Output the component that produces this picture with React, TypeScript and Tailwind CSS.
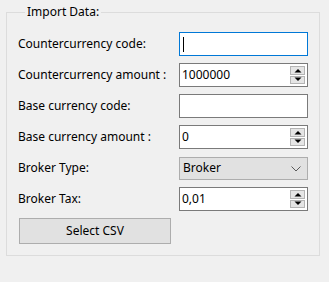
import React from 'react'

const font = { fontFamily: '"Noto Sans", "Segoe UI", sans-serif' }

function Spinner() {
  return (
    <div className="absolute right-[1px] top-[1px] bottom-[1px] w-[16px] flex flex-col gap-[1px] py-[1px] pr-[1px]">
      <div className="flex-1 bg-[#e5e5e5] border border-[#b4b4b4] flex items-center justify-center">
        <svg width="8" height="5" viewBox="0 0 8 5">
          <path d="M0.5 4.5 L4 1 L7.5 4.5 Z" fill="#000" />
        </svg>
      </div>
      <div className="flex-1 bg-[#e5e5e5] border border-[#b4b4b4] flex items-center justify-center">
        <svg width="8" height="5" viewBox="0 0 8 5">
          <path d="M0.5 0.5 L4 4 L7.5 0.5 Z" fill="#000" />
        </svg>
      </div>
    </div>
  )
}

function TextBox({ value = '', focused = false, spin = false }: { value?: string; focused?: boolean; spin?: boolean }) {
  return (
    <div
      className={`relative h-[24px] w-[129px] bg-white border flex items-center pl-[2px] text-[12px] text-black ${
        focused ? 'border-[#0078d7]' : 'border-[#7a7a7a]'
      }`}
    >
      {focused && <div className="w-[1px] h-[15px] bg-black ml-[1px]" />}
      <span>{value}</span>
      {spin && <Spinner />}
    </div>
  )
}

function Combo({ value }: { value: string }) {
  return (
    <div className="relative h-[23px] w-[129px] bg-[#e1e1e1] border border-[#adadad] flex items-center pl-[3px] text-[12px] text-black">
      <span>{value}</span>
      <svg className="absolute right-[6px] top-[8px]" width="10" height="6" viewBox="0 0 10 6">
        <path d="M0.5 0.5 L5 5 L9.5 0.5" fill="none" stroke="#5a5a5a" strokeWidth="1" />
      </svg>
    </div>
  )
}

const rows: { label: string; field: React.ReactNode }[] = [
  { label: 'Countercurrency code:', field: <TextBox focused /> },
  { label: 'Countercurrency amount :', field: <TextBox value="1000000" spin /> },
  { label: 'Base currency code:', field: <TextBox /> },
  { label: 'Base currency amount :', field: <TextBox value="0" spin /> },
  { label: 'Broker Type:', field: <Combo value="Broker" /> },
  { label: 'Broker Tax:', field: <TextBox value="0,01" spin /> },
]

export default function App() {
  return (
    <div className="w-[329px] h-[282px] bg-[#f0f0f0] overflow-hidden pt-[4px] pl-[6px]" style={font}>
      <fieldset className="w-[314px] border border-[#dcdcdc] pl-[11px] pt-[12px] pb-[11px]">
        <legend className="ml-[7px] px-[2px] text-[12px] leading-[16px] text-black">Import Data:</legend>
        <div className="flex flex-col gap-[7px]">
          {rows.map((r) => (
            <div key={r.label} className="flex items-center h-[24px]">
              <div className="w-[161px] text-[12px] text-black">{r.label}</div>
              {r.field}
            </div>
          ))}
          <button className="w-[152px] h-[26px] ml-[1px] bg-[#e1e1e1] border border-[#adadad] text-[12px] text-black">
            Select CSV
          </button>
        </div>
      </fieldset>
    </div>
  )
}
